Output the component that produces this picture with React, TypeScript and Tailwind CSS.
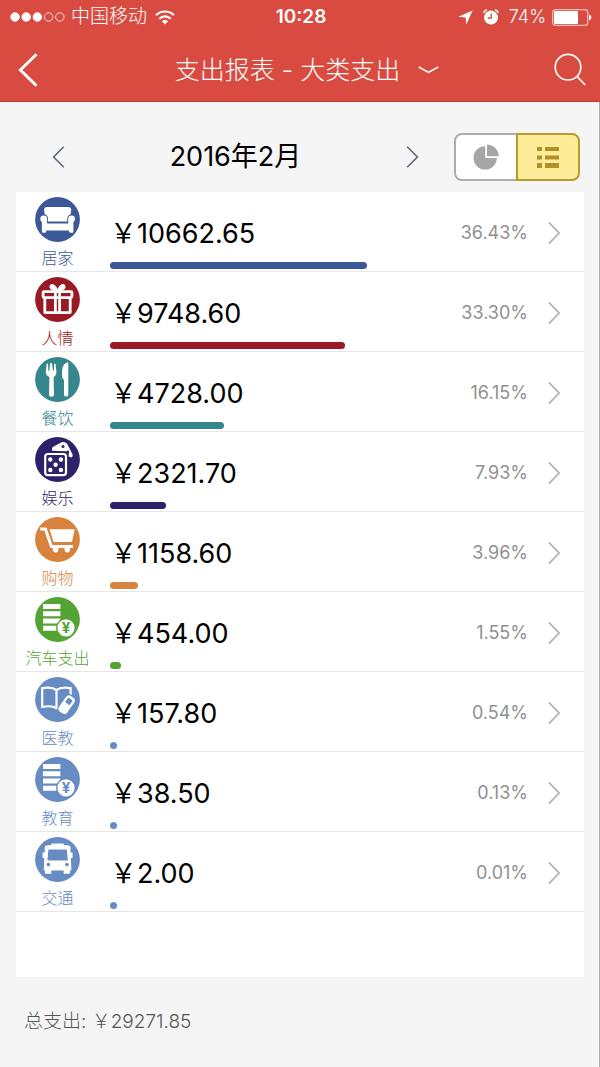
import React from 'react';

type IconProps = { color: string };

const SofaIcon: React.FC<IconProps> = () => (
  <g fill="#fff">
    <path d="M12.2 10H33Q36.3 10 36.2 13L35.6 17.2Q32.6 18.2 32.3 21.5V24.5H13V21.5Q12.8 18.2 9.7 17.2L9.1 13Q9 10 12.2 10Z" />
    <path d="M8.7 18.4a3.4 3.4 0 0 1 3.4 3.4v4.8h21.1v-4.8a3.4 3.4 0 0 1 6.8 0c0 1.8-.8 2.7-1.6 3.1v9.6q0 1.2-1.2 1.2h-1.8q-1 0-1.2-1l-.2-1.2H11.3l-.2 1.2q-.2 1-1.2 1H8.1q-1.2 0-1.2-1.2v-9.6c-.8-.4-1.6-1.3-1.6-3.1a3.4 3.4 0 0 1 3.4-3.4Z" />
  </g>
);

const GiftIcon: React.FC<IconProps> = () => (
  <g fill="none" stroke="#fff" strokeWidth="2.8" strokeLinejoin="round">
    <rect x="8.1" y="14.6" width="28.8" height="6" rx="1" />
    <path d="M9.8 20V35.6H35.2V20" />
    <path d="M20.4 15V35M24.6 15V35" strokeWidth="2.8" />
    <path d="M22.5 14C21 9 17 6.5 15.7 8.6S17.5 13.8 22.5 14C24 9 28 6.5 29.3 8.6S27.5 13.8 22.5 14Z" fill="#fff" strokeWidth="1.8" />
  </g>
);

const ForkIcon: React.FC<IconProps> = () => (
  <g fill="#fff">
    <path d="M10.8 14.5 11.6 7.2q.9-1.2 1.5 0l.2 6.3q.6.9 1 0l.9-7.1q.9-1.2 1.8 0l.9 7.1q.4.9 1 0l.2-6.3q.6-1.2 1.5 0l.8 7.3q.2 4-2.8 5.5l.4 18q-.2 1.8-2.6 1.8T14 38l.4-18q-3.8-1.5-3.6-5.5Z" />
    <path d="M33.3 5.2V38q-.2 1.6-2.2 1.6T29 38V23.2L27.2 20.6C26.6 12.5 27.2 6.2 33.3 5.2Z" />
  </g>
);

const DiceIcon: React.FC<IconProps> = ({ color }) => (
  <g fill="#fff">
    <path d="M17.2 13.8Q16.2 11 18.6 9.6L26.6 5.2Q30 4.2 32.3 7L37.6 17.6Q38.2 19.6 36.4 20.4L33.7 19.6V17Q33.4 14.2 30.4 14.2Z" />
    <circle cx="28" cy="9.6" r="1.5" fill={color} />
    <circle cx="32.8" cy="15" r="1.5" fill={color} />
    <rect x="10.2" y="17" width="20.8" height="21.2" rx="2.6" fill={color} stroke="#fff" strokeWidth="2.2" />
    <circle cx="15.3" cy="22.5" r="2.2" />
    <circle cx="25.9" cy="22.5" r="2.2" />
    <circle cx="20.6" cy="27.7" r="2.2" />
    <circle cx="15.3" cy="33" r="2.2" />
    <circle cx="25.9" cy="33" r="2.2" />
  </g>
);

const CartIcon: React.FC<IconProps> = () => (
  <g fill="#fff">
    <path d="M5.2 12H10.4L16.4 29.6H38" fill="none" stroke="#fff" strokeWidth="3" strokeLinejoin="round" />
    <path d="M14.6 12.2H39.6L37 25H18.6Z" />
    <circle cx="20.6" cy="32.6" r="2.8" />
    <circle cx="32.3" cy="32.6" r="2.8" />
  </g>
);

const CoinsIcon: React.FC<IconProps> = ({ color }) => (
  <g fill="#fff">
    <path d="M8 7H25.4V12.1H8ZM8 14.3H25.4V19.3H8ZM8 21.5H25.4V26.5H8ZM8 28.7H25.4V33.8H8Z" />
    <circle cx="31" cy="30.8" r="9.3" stroke={color} strokeWidth="1.4" />
    <text x="31" y="36.2" textAnchor="middle" fontSize="15" fontWeight="700" fill={color}>¥</text>
  </g>
);

const BookIcon: React.FC<IconProps> = ({ color }) => (
  <g fill="none" stroke="#fff" strokeWidth="2.2">
    <path d="M21.5 13C18 10.4 13 10.2 7.2 11.2V30C13 28.8 18 29 21.5 31.2 25 29 30 28.8 35.6 30V11.2C30 10.2 25 10.4 21.5 13ZM21.5 13V31" />
    <g transform="rotate(35 32 27)">
      <rect x="26.4" y="17.6" width="11.4" height="20.4" rx="4.2" fill="#fff" stroke={color} strokeWidth="1.4" />
      <rect x="29.4" y="20.8" width="5.4" height="5.8" rx="1" fill={color} stroke="none" />
    </g>
  </g>
);

const BusIcon: React.FC<IconProps> = ({ color }) => (
  <g fill="#fff">
    <path d="M16.3 8V6.4H28.7V8L33.8 8.6Q35.4 8.8 35.5 10.4V15.6H37.6V21H35.9L36.4 33.6H34.9V36.8H28.7V33.6H16.3V36.8H10V33.6H8.8L9.3 21H7.6V15.6H9.7V10.4Q9.8 8.8 11.4 8.6Z" />
    <path d="M13.4 12.4H31.8L32.8 23.6H12.4Z" fill={color} />
    <circle cx="13.4" cy="27.6" r="1.8" fill={color} />
    <circle cx="31.9" cy="27.6" r="1.8" fill={color} />
  </g>
);

const CATEGORIES = [
  { name: '居家', amount: '10662.65', percent: 36.43, icon: SofaIcon, color: '#3c5898' },
  { name: '人情', amount: '9748.60', percent: 33.3, icon: GiftIcon, color: '#991a24' },
  { name: '餐饮', amount: '4728.00', percent: 16.15, icon: ForkIcon, color: '#36868d' },
  { name: '娱乐', amount: '2321.70', percent: 7.93, icon: DiceIcon, color: '#2d2169' },
  { name: '购物', amount: '1158.60', percent: 3.96, icon: CartIcon, color: '#d8833d' },
  { name: '汽车支出', amount: '454.00', percent: 1.55, icon: CoinsIcon, color: '#54a433' },
  { name: '医教', amount: '157.80', percent: 0.54, icon: BookIcon, color: '#678bc3' },
  { name: '教育', amount: '38.50', percent: 0.13, icon: CoinsIcon, color: '#678bc3' },
  { name: '交通', amount: '2.00', percent: 0.01, icon: BusIcon, color: '#678bc3' },
];

// One percent of spending takes this share of the bar track
const BAR_SCALE = 1.488;

const StatusBar: React.FC = () => (
  <div className="grid h-[34px] grid-cols-[1fr_auto_1fr] items-center pl-[10px] pr-2">
    <div className="flex items-center gap-[6px]">
      <svg width="55" height="10" viewBox="0 0 55 10" fill="#fff" stroke="#fff" strokeWidth="0.8">
        <circle cx="5" cy="5" r="4.3" />
        <circle cx="16.2" cy="5" r="4.3" />
        <circle cx="27.4" cy="5" r="4.3" />
        <circle cx="38.6" cy="5" r="4.2" fill="none" />
        <circle cx="49.8" cy="5" r="4.2" fill="none" />
      </svg>
      <span className="text-[19px] leading-6 font-light">中国移动</span>
      <svg className="ml-[2px]" width="20" height="15" viewBox="0 0 20 15" fill="none" stroke="#fff" strokeWidth="2.2">
        <path d="M1 5.2a12.8 12.8 0 0 1 18 0" />
        <path d="M4.3 8.7a8.1 8.1 0 0 1 11.4 0" />
        <path d="M10 14.4 6.9 11.3a4.4 4.4 0 0 1 6.2 0Z" fill="#fff" stroke="none" />
      </svg>
    </div>
    <span className="text-[19px] leading-6 font-semibold">10:28</span>
    <div className="flex items-center justify-end">
      <svg width="15" height="15" viewBox="0 0 15 15" fill="#fff">
        <path d="M14.6.4 8.3 14.6 7.6 7.6.4 6.7Z" />
      </svg>
      <svg className="ml-[10px]" width="16" height="16" viewBox="0 0 16 16">
        <circle cx="8" cy="8.6" r="7" fill="#fff" />
        <path d="M8.2 4.6V9H4.8" fill="none" stroke="#d94b41" strokeWidth="1.3" />
        <path d="M.6 4A5 5 0 0 1 4 .8M15.4 4A5 5 0 0 0 12 .8" fill="none" stroke="#fff" strokeWidth="1.5" />
      </svg>
      <span className="ml-[10px] text-[18px] leading-6 font-light">74%</span>
      <svg className="ml-[6px]" width="40" height="17" viewBox="0 0 40 17">
        <rect x="0.7" y="0.7" width="35" height="15.6" rx="2.6" fill="none" stroke="#f3bdb8" strokeWidth="1.2" />
        <rect x="2" y="2" width="24" height="13" rx="1" fill="#fff" />
        <path d="M37 5.6q2.4.6 2.4 2.9T37 11.4Z" fill="#fff" />
      </svg>
    </div>
  </div>
);

const App: React.FC = () => {
  return (
    <div className="flex min-h-screen flex-col bg-[#f5f5f5] font-['Inter','Noto_Sans_CJK_SC',sans-serif]">
      <header className="border-b border-[#c63d34] bg-[#d94b41] text-white">
        <StatusBar />
        <div className="grid h-[67px] grid-cols-[1fr_auto_1fr] items-center pt-1 pr-[14px] pl-[18px]">
          <button type="button" aria-label="返回" className="justify-self-start">
            <svg width="20" height="34" viewBox="0 0 20 34" fill="none" stroke="#fff" strokeWidth="3">
              <path d="M18.5 1.2 2.4 17 18.5 32.8" />
            </svg>
          </button>
          <button type="button" className="ml-[10px] flex items-center gap-[18px] text-[25px] leading-9 font-light">
            <span>支出报表 - 大类支出</span>
            <svg width="21" height="8" viewBox="0 0 21 8" fill="none" stroke="#fff" strokeWidth="1.6">
              <path d="M.8 1 10.5 6.4 20.2 1" />
            </svg>
          </button>
          <button type="button" aria-label="搜索" className="justify-self-end">
            <svg width="32" height="33" viewBox="0 0 32 33" fill="none" stroke="#fff" strokeWidth="1.7">
              <circle cx="14" cy="14.2" r="12.8" />
              <path d="M23 23.4 31.2 32" />
            </svg>
          </button>
        </div>
      </header>

      <main className="flex-1 border-r border-[#acacac] pr-[15px] pl-4">
        <div className="flex h-[90px] items-center pt-5 pr-1">
          <div className="flex flex-1 items-center justify-between pr-[35px] pl-9">
            <button type="button" aria-label="上个月">
              <svg width="13" height="22" viewBox="0 0 13 22" fill="none" stroke="#5f6779" strokeWidth="1.6">
                <path d="M11.8.8 1.6 11 11.8 21.2" />
              </svg>
            </button>
            <h1 className="text-[27px] leading-9 text-black">2016年2月</h1>
            <button type="button" aria-label="下个月">
              <svg width="13" height="22" viewBox="0 0 13 22" fill="none" stroke="#5f6779" strokeWidth="1.6">
                <path d="M1.2.8 11.4 11 1.2 21.2" />
              </svg>
            </button>
          </div>
          <div className="flex h-12">
            <button type="button" aria-label="饼图" className="flex w-[62px] items-center justify-center rounded-l-lg border-2 border-r-0 border-[#adadad] bg-white">
              <svg width="26" height="26" viewBox="0 0 26 26" fill="#a6a6a6">
                <path d="M12.2 2.2V14H23.9A11.7 11.7 0 1 1 12.2 2.2Z" />
                <path d="M14 .6A12 12 0 0 1 25.8 12.3H14Z" />
              </svg>
            </button>
            <button type="button" aria-label="列表" aria-pressed="true" className="flex w-16 items-center justify-center rounded-r-lg border-2 border-[#b99a2e] bg-[#feec99]">
              <svg width="22" height="21" viewBox="0 0 22 21" fill="#b29126">
                <path d="M0 0H5V4H0ZM8 0H22V4H8ZM0 8.6H5V12.4H0ZM8 8.6H22V12.4H8ZM0 16H5V21H0ZM8 16H22V21H8Z" />
              </svg>
            </button>
          </div>
        </div>

        <ul className="bg-white pb-[65px]">
          {CATEGORIES.map((item) => (
            <li key={item.name}>
              <a href="#" className="flex h-20 border-b border-[#e6e6e6]">
                <div className="flex w-[83px] shrink-0 flex-col items-center pt-[5px]" style={{ color: item.color }}>
                  <svg width="45" height="45" viewBox="0 0 45 45">
                    <circle cx="22.5" cy="22.5" r="22.4" fill={item.color} />
                    <item.icon color={item.color} />
                  </svg>
                  <span className="mt-[6px] text-[16px] leading-5 font-light whitespace-nowrap">{item.name}</span>
                </div>
                <div className="ml-[11px] flex flex-1 flex-col pt-3">
                  <div className="flex h-[58px] items-center pr-6">
                    <span className="flex-1 pt-[2px] text-[27px] leading-9 text-black">￥{item.amount}</span>
                    <span className="text-[18px] leading-6 text-[#909090]">{item.percent.toFixed(2)}%</span>
                    <svg className="ml-5" width="12" height="24" viewBox="0 0 12 24" fill="none" stroke="#b2b2b2" strokeWidth="1.7">
                      <path d="M.8 1.4 11 12 .8 22.6" />
                    </svg>
                  </div>
                  <div
                    className="h-[7px] min-w-[7px] rounded-full"
                    style={{ width: `${item.percent * BAR_SCALE}%`, backgroundColor: item.color }}
                  />
                </div>
              </a>
            </li>
          ))}
        </ul>

        <p className="mt-7 px-2 pt-[1px] pb-4 text-[19px] leading-8 font-light text-[#555]">总支出: ￥29271.85</p>
      </main>
    </div>
  );
};

export default App;
